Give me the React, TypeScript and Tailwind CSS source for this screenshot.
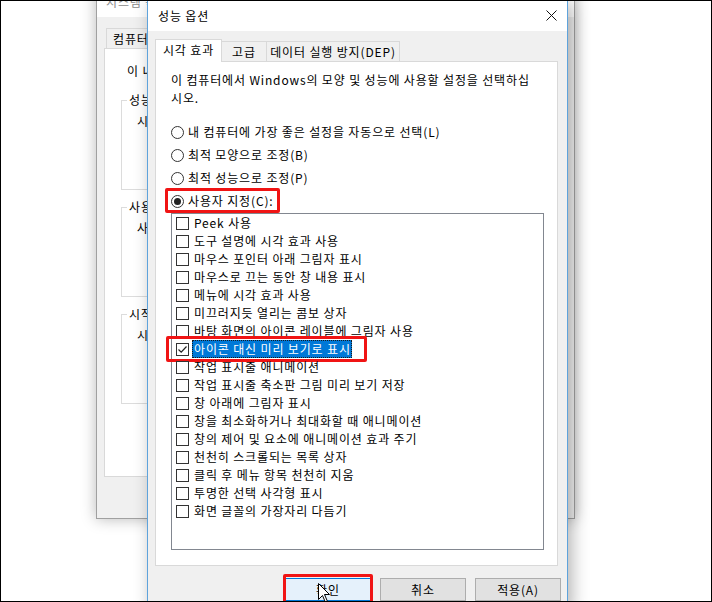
import React from "react";

const effects = [
  "Peek 사용",
  "도구 설명에 시각 효과 사용",
  "마우스 포인터 아래 그림자 표시",
  "마우스로 끄는 동안 창 내용 표시",
  "메뉴에 시각 효과 사용",
  "미끄러지듯 열리는 콤보 상자",
  "바탕 화면의 아이콘 레이블에 그림자 사용",
  "아이콘 대신 미리 보기로 표시",
  "작업 표시줄 애니메이션",
  "작업 표시줄 축소판 그림 미리 보기 저장",
  "창 아래에 그림자 표시",
  "창을 최소화하거나 최대화할 때 애니메이션",
  "창의 제어 및 요소에 애니메이션 효과 주기",
  "천천히 스크롤되는 목록 상자",
  "클릭 후 메뉴 항목 천천히 지움",
  "투명한 선택 사각형 표시",
  "화면 글꼴의 가장자리 다듬기",
];

const radios = [
  "내 컴퓨터에 가장 좋은 설정을 자동으로 선택(L)",
  "최적 모양으로 조정(B)",
  "최적 성능으로 조정(P)",
  "사용자 지정(C):",
];

// checkbox 13x13 like the win10 one
const Checkbox = ({ checked }: { checked?: boolean }) => (
  <span className="w-[13px] h-[13px] shrink-0 border border-[#333] bg-white flex items-center justify-center">
    {checked && (
      <svg width="11" height="11" viewBox="0 0 11 11">
        <path d="M1.5 5.5 L4.2 8.2 L9.5 2.5" fill="none" stroke="#222" strokeWidth="1.2" />
      </svg>
    )}
  </span>
);

const Radio = ({ checked }: { checked?: boolean }) => (
  <span className="w-[13px] h-[13px] shrink-0 rounded-full border border-[#333] bg-white flex items-center justify-center">
    {checked && <span className="w-[7px] h-[7px] rounded-full bg-[#222]" />}
  </span>
);

const RedBox = ({ className }: { className: string }) => (
  <span className={"absolute border-[3px] border-[#f01414] rounded-[2px] pointer-events-none " + className} />
);

const Group = ({ title, text }: { title: string; text: string }) => (
  <fieldset className="border border-[#dcdcdc] ml-[16px] mr-[16px] h-[99px]">
    <legend className="ml-[5px] px-[2px] leading-[18px]">{title}</legend>
    <div className="mt-[3px] pl-[15px] leading-[18px]">{text}</div>
  </fieldset>
);

const BackWindow = () => (
  <div className="absolute left-[95px] top-[-16px] w-[479px] h-[534px] flex flex-col border border-[#a0a0a0] bg-[#f0f0f0] shadow-[0_0_14px_rgba(0,0,0,0.28)]">
    <div className="h-[31px] bg-white flex items-center pl-[9px] text-[#8a8a8a]">시스템 속성</div>
    <div className="flex-1 flex flex-col px-[7px] pt-[11px]">
      <div className="flex">
        <div className="ml-[2px] h-[20px] px-[6px] border border-b-0 border-[#d9d9d9] leading-[19px]">컴퓨터 이름</div>
      </div>
      <div className="h-[429px] bg-white border border-[#d9d9d9] pt-[13px]">
        <div className="pl-[22px] leading-[18px]">이 내용을 변경하려면 관리자로 로그온해야 합니다.</div>
        <div className="mt-[11px] flex flex-col gap-[8px]">
          <Group title="성능" text="시각 효과, 프로세서 일정, 메모리 사용 및 가상 메모리" />
          <Group title="사용자 프로필" text="사용자 로그인에 관련된 바탕 화면 설정" />
          <Group title="시작 및 복구" text="시스템 시작, 시스템 오류 및 디버깅 정보" />
        </div>
      </div>
    </div>
  </div>
);

const Button = ({ label, primary }: { label: string; primary?: boolean }) => (
  <div
    className={
      "relative w-[86px] h-[23px] flex items-center justify-center border " +
      (primary ? "bg-[#e5f1fb] border-[#0078d7]" : "bg-[#e1e1e1] border-[#adadad]")
    }
  >
    {label}
    {primary && <RedBox className="-left-[3px] -top-[5px] w-[90px] h-[32px]" />}
  </div>
);

const PerfWindow = () => (
  <div className="absolute left-[146px] top-[-2px] w-[421px] h-[610px] flex flex-col border border-[#5ea3dc] bg-[#f0f0f0] shadow-[4px_4px_16px_rgba(0,0,0,0.3)]">
    <div className="h-[31px] shrink-0 bg-white flex items-center justify-between pl-[10px] pr-[10px]">
      <span>성능 옵션</span>
      <svg width="11" height="11" viewBox="0 0 11 11">
        <path d="M0.5 0.5 L10.5 10.5 M10.5 0.5 L0.5 10.5" stroke="#111" strokeWidth="1" />
      </svg>
    </div>

    <div className="flex flex-col pl-[7px] pr-[9px] pt-[8px]">
      {/* tabs */}
      <div className="relative z-10 flex items-end -mb-px">
        <div className="w-[67px] h-[23px] bg-white border border-b-0 border-[#d9d9d9] flex items-center justify-center leading-none pb-[2px]">
          시각 효과
        </div>
        <div className="w-[45px] h-[20px] mb-px border border-b-0 border-l-0 border-[#d9d9d9] flex items-center justify-center">
          고급
        </div>
        <div className="w-[133px] h-[20px] mb-px border border-b-0 border-l-0 border-[#d9d9d9] flex items-center justify-center">
          데이터 실행 방지(DEP)
        </div>
      </div>

      <div className="h-[505px] bg-white border border-[#d9d9d9] pl-[15px] pt-[9px]">
        <div className="leading-[18px]">
          이 컴퓨터에서 Windows의 모양 및 성능에 사용할 설정을 선택하십
          <br />
          시오.
        </div>

        <div className="mt-[16px] flex flex-col gap-[5px]">
          {radios.map((r, i) => (
            <div key={r} className="relative h-[18px] flex items-center gap-[4px]">
              <Radio checked={i === 3} />
              <span className="leading-[18px]">{r}</span>
              {i === 3 && <RedBox className="-left-[6px] -top-[4px] w-[115px] h-[25px]" />}
            </div>
          ))}
        </div>

        <div className="mt-[3px] w-[373px] h-[337px] border border-[#828790] bg-white">
          {effects.map((e, i) => (
            <div key={e} className="relative h-[18px] flex items-center pl-[4px]">
              <Checkbox checked={i === 7} />
              {i === 7 ? (
                <span className="ml-[3px] pl-[1px] h-[18px] leading-[16px] bg-[#0078d7] text-white border border-dotted border-[#1a1a1a]">
                  {e}
                </span>
              ) : (
                <span className="ml-[5px] leading-[18px]">{e}</span>
              )}
              {i === 7 && <RedBox className="-left-[6px] -top-[4px] w-[201px] h-[26px]" />}
            </div>
          ))}
        </div>
      </div>

      <div className="mt-[12px] -mr-[3px] flex justify-end gap-[9px]">
        <Button label="확인" primary />
        <Button label="취소" />
        <Button label="적용(A)" />
      </div>
    </div>
  </div>
);

export default function App() {
  return (
    <div className="relative w-[712px] h-[602px] overflow-hidden bg-white border border-black font-['Noto_Sans_CJK_KR',sans-serif] text-[12px] tracking-[0.85px] text-black">
      <BackWindow />
      <PerfWindow />
      {/* mouse pointer */}
      <svg className="absolute left-[317px] top-[582px]" width="13" height="21" viewBox="0 0 13 21">
        <path d="M0.5 0.5 L0.5 16.5 L4.5 12.5 L7.5 19.5 L9.5 18.5 L6.5 11.5 L11.5 11.5 Z" fill="#fff" stroke="#000" strokeWidth="1" />
      </svg>
    </div>
  );
}
